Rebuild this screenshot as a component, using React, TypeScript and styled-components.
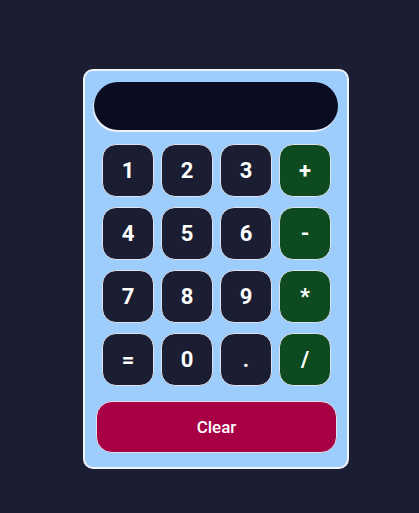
import React, { useState } from "react";
import styled, { createGlobalStyle } from "styled-components";

const colors = {
  page: "#1b1e33",
  card: "#9ccdfc",
  display: "#0a0c22",
  key: "#1b1e33",
  op: "#0d4a1f",
  clear: "#a80045",
  white: "#ffffff",
};

const GlobalStyle = createGlobalStyle`
  html, body {
    margin: 0;
    padding: 0;
    background-color: ${colors.page};
    font-family: Roboto, "Liberation Sans", sans-serif;
  }
`;

const Page = styled.div`
  min-height: 513px;
  padding: 69px 0 0 83px;
  box-sizing: border-box;
`;

const Card = styled.div`
  width: 266px;
  box-sizing: border-box;
  background-color: ${colors.card};
  border: 2px solid #f0f3f8;
  border-radius: 10px;
  padding: 11px 9px 14px;
  display: flex;
  flex-direction: column;
`;

const Display = styled.div`
  height: 48px;
  border-radius: 24px;
  background-color: ${colors.display};
  box-shadow: -1px 2px 1px #f2f4f8;
  color: ${colors.white};
  font-size: 24px;
  display: flex;
  align-items: center;
  justify-content: flex-end;
  padding: 0 20px;
  overflow: hidden;
`;

const Keys = styled.div`
  display: grid;
  grid-template-columns: repeat(4, 52px);
  grid-auto-rows: 53px;
  column-gap: 7px;
  row-gap: 10px;
  margin: 14px 0 0 8px;
`;

const Key = styled.button<{ $op?: boolean }>`
  border: 1px solid #dfe3ec;
  border-radius: 14px;
  background-color: ${(p) => (p.$op ? colors.op : colors.key)};
  color: ${colors.white};
  font-family: Roboto, "Liberation Sans", sans-serif;
  font-size: 22px;
  font-weight: 700;
  padding: 0;
  cursor: pointer;
`;

const ClearButton = styled.button`
  margin: 15px 1px 0 2px;
  height: 52px;
  border: 1px solid #dfe3ec;
  border-radius: 16px;
  background-color: ${colors.clear};
  color: ${colors.white};
  font-family: Roboto, "Liberation Sans", sans-serif;
  font-size: 17px;
  font-weight: 500;
  cursor: pointer;
`;

const keys = ["1", "2", "3", "+", "4", "5", "6", "-", "7", "8", "9", "*", "=", "0", ".", "/"];
const ops = ["+", "-", "*", "/"];

const App: React.FC = () => {
  const [value, setValue] = useState("");

  const press = (k: string) => {
    if (k === "=") {
      try {
        // eslint-disable-next-line no-new-func
        setValue(String(Function(`return (${value})`)()));
      } catch {
        setValue("Error");
      }
      return;
    }
    setValue((v) => (v === "Error" ? k : v + k));
  };

  return (
    <>
      <GlobalStyle />
      <Page>
        <Card>
          <Display>{value}</Display>
          <Keys>
            {keys.map((k) => (
              <Key key={k} $op={ops.includes(k)} onClick={() => press(k)}>
                {k}
              </Key>
            ))}
          </Keys>
          <ClearButton onClick={() => setValue("")}>Clear</ClearButton>
        </Card>
      </Page>
    </>
  );
};

export default App;
